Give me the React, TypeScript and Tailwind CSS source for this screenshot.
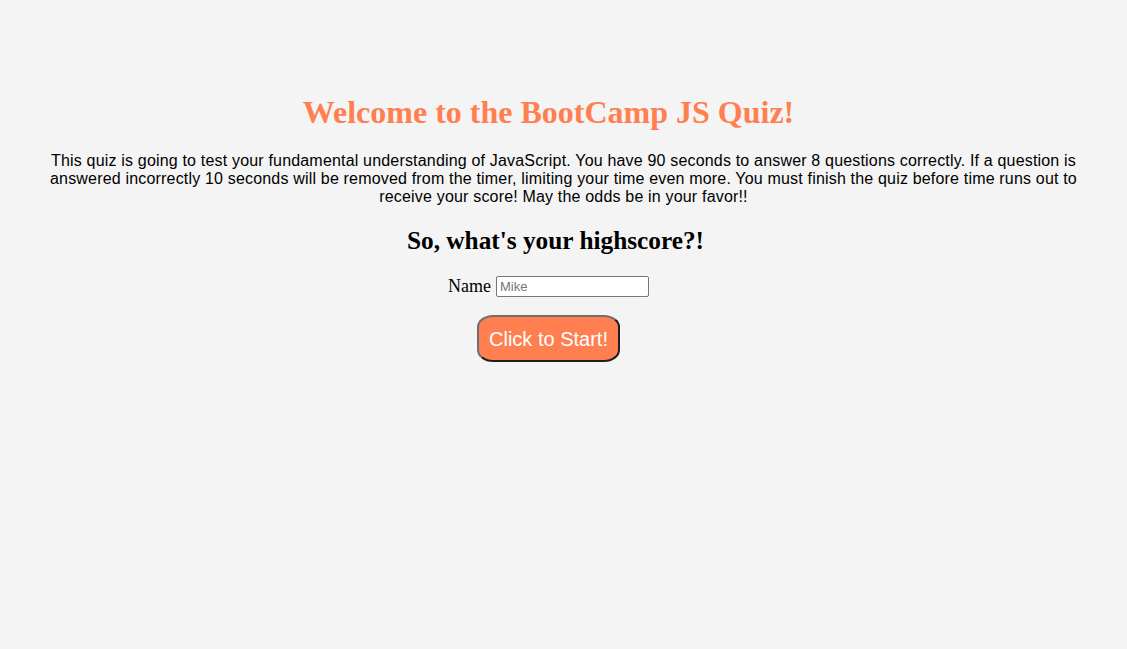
import { useState } from "react"

const App = () => {
    const [name, setName] = useState("")

    return (
        <div className="min-h-screen bg-[#f4f4f4] pt-[94px] pl-[40px] pr-[70px] text-center font-['Liberation_Serif',serif] text-black">
            <h1 className="text-[32px] leading-[37px] font-bold text-[#ff7f50]">
                Welcome to the BootCamp JS Quiz!
            </h1>
            <p className="mt-[21px] -mr-[30px] text-[16px] leading-[18px] tracking-[0.18px] font-['Liberation_Sans',Arial,sans-serif]">
                This quiz is going to test your fundamental understanding of JavaScript. You have 90 seconds to answer 8 questions correctly. If a question is answered incorrectly 10 seconds will be removed from the timer, limiting your time even more. You must finish the quiz before time runs out to receive your score! May the odds be in your favor!!
            </p>
            <h2 className="mt-[20px] ml-[14px] text-[25.3px] leading-[28px] font-bold">
                So, what's your highscore?!
            </h2>
            <div className="mt-[22px] flex justify-center items-center gap-[5px]">
                <label htmlFor="name" className="text-[18px] leading-[21px]">Name</label>
                <input
                    id="name"
                    type="text"
                    placeholder="Mike"
                    value={name}
                    onChange={(e) => setName(e.target.value)}
                    className="w-[153px] h-[21px] bg-white border border-[#767676] rounded-[2px] px-[3px] text-[13px] font-['Liberation_Sans',Arial,sans-serif] placeholder:text-[#757575] outline-none"
                />
            </div>
            <button className="mt-[18px] w-[143px] h-[47px] bg-[#ff7f50] text-white text-[20px] font-['Liberation_Sans',Arial,sans-serif] rounded-[16px/12px] border-2 border-t-[#6f6f6f] border-l-[#6f6f6f] border-r-[#1f1f1f] border-b-[#1f1f1f]">
                Click to Start!
            </button>
        </div>
    )
}

export default App
